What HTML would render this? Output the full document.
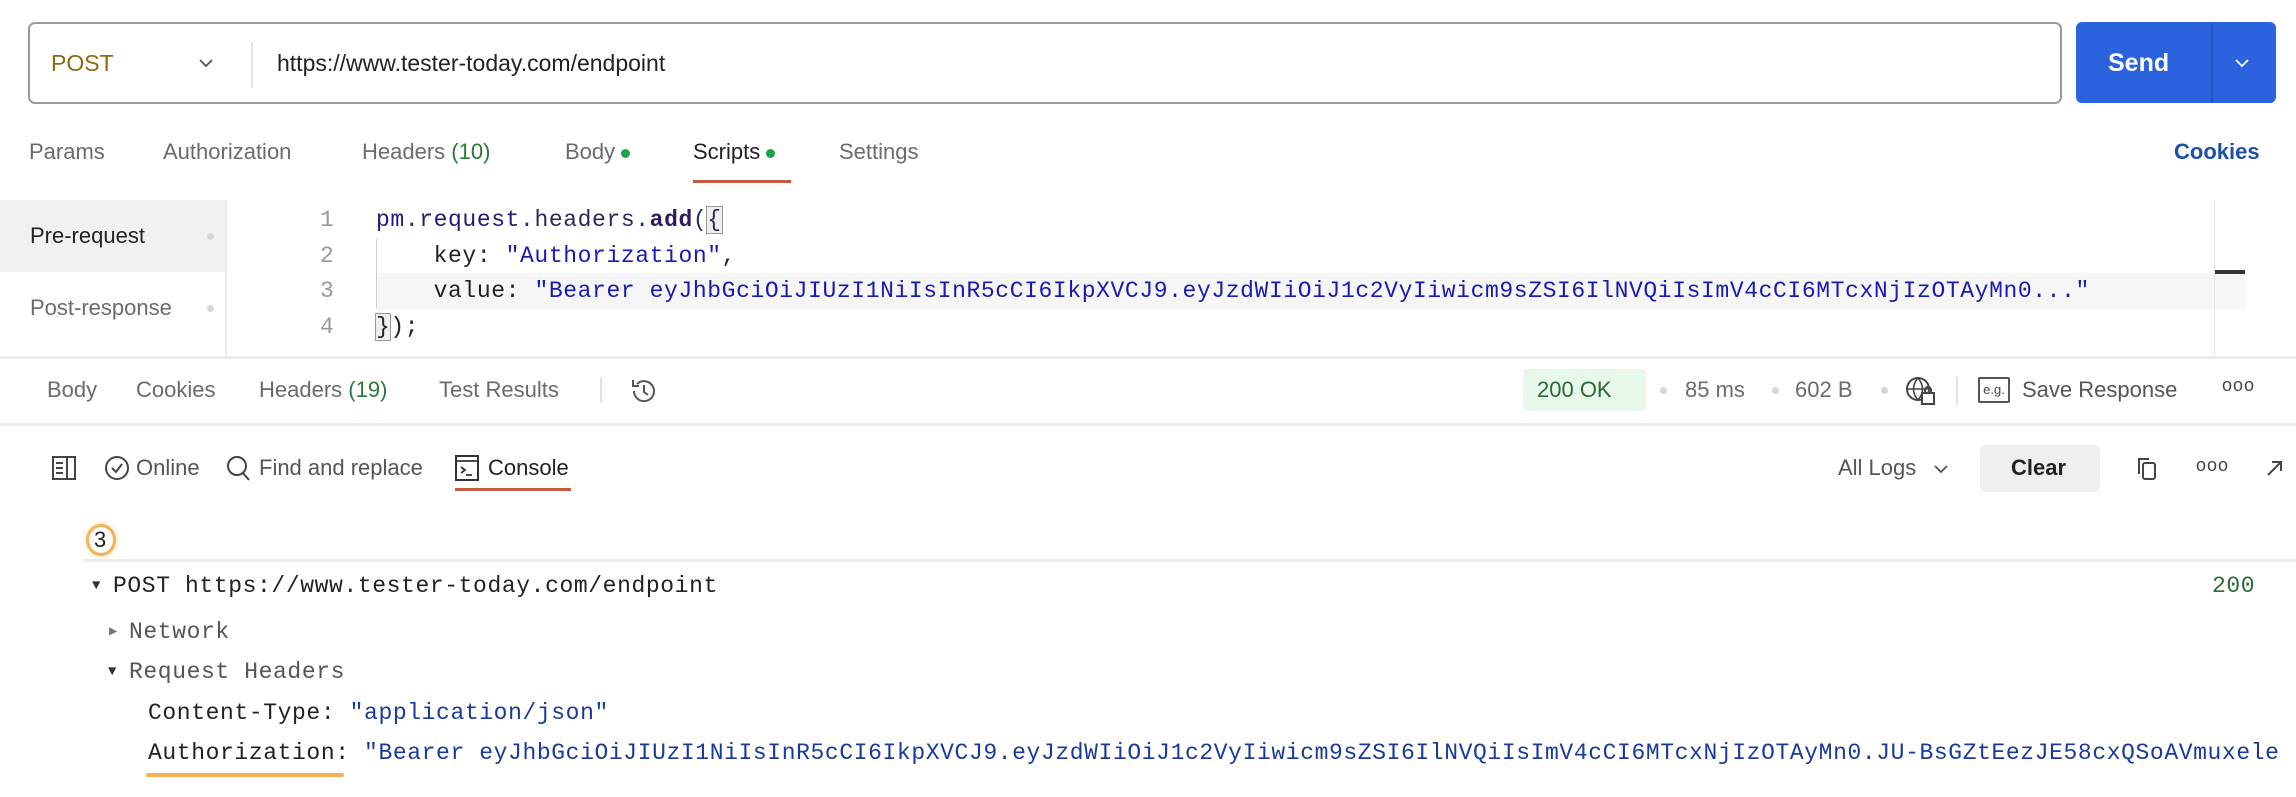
<!DOCTYPE html>
<html><head><meta charset="utf-8"><style>
*{margin:0;padding:0;box-sizing:border-box}
body{width:2296px;height:797px;overflow:hidden;background:#fff;position:relative;font-family:"Liberation Sans",sans-serif;color:#6b6b6b}
.a{position:absolute;white-space:pre}
.s{font-size:22px;line-height:30px}
.m{font-family:"Liberation Mono",monospace;font-size:23px;letter-spacing:0.6px;line-height:30px}
.dot{display:inline-block;width:9px;height:9px;border-radius:50%;background:#1aa34a;vertical-align:middle;margin-left:6px}
.g{color:#2a7a3a}
.sep{position:absolute;height:3px;background:#ebebeb}
.gd{position:absolute;width:7px;height:7px;border-radius:50%;background:#d6d6d6}
</style></head><body>
<div class="a" style="left:28px;top:22px;width:2034px;height:82px;border:2px solid #9a9a9a;border-radius:7px"></div>
<div class="a s" style="left:51px;top:48px;color:#8c6a10;font-size:23px">POST</div>
<svg class="a" style="left:198px;top:57px" width="16" height="12" viewBox="0 0 16 12"><path d="M2 3l6 6 6-6" fill="none" stroke="#555" stroke-width="1.8"/></svg>
<div class="a" style="left:251px;top:42px;width:2px;height:46px;background:#e2e2e2"></div>
<div class="a s" style="left:277px;top:48px;color:#222;font-size:23px">https://www.tester-today.com/endpoint</div>
<div class="a" style="left:2076px;top:22px;width:200px;height:81px;background:#2b63de;border-radius:6px"></div>
<div class="a" style="left:2211px;top:22px;width:2px;height:81px;background:#2456c4"></div>
<div class="a s" style="left:2108px;top:48px;color:#fff;font-size:25px;font-weight:bold">Send</div>
<svg class="a" style="left:2234px;top:57px" width="16" height="12" viewBox="0 0 16 12"><path d="M2 3l6 6 6-6" fill="none" stroke="#fff" stroke-width="1.8"/></svg>
<div class="a s" style="left:29px;top:137px">Params</div>
<div class="a s" style="left:163px;top:137px">Authorization</div>
<div class="a s" style="left:362px;top:137px">Headers <span class="g">(10)</span></div>
<div class="a s" style="left:565px;top:137px">Body<span class="dot"></span></div>
<div class="a s" style="left:693px;top:137px;color:#212121">Scripts<span class="dot"></span></div>
<div class="a" style="left:693px;top:180px;width:98px;height:3px;background:#c45a3c"></div>
<div class="a s" style="left:839px;top:137px">Settings</div>
<div class="a s" style="left:2174px;top:137px;color:#1f4fa8;font-weight:bold">Cookies</div>
<div class="a" style="left:0;top:200px;width:227px;height:157px;border-right:2px solid #ececec"></div>
<div class="a" style="left:0;top:200px;width:225px;height:72px;background:#f1f1f1"></div>
<div class="a s" style="left:30px;top:221px;color:#222">Pre-request</div>
<div class="gd" style="left:207px;top:233px"></div>
<div class="a s" style="left:30px;top:293px">Post-response</div>
<div class="gd" style="left:207px;top:305px"></div>
<div class="a" style="left:376px;top:273px;width:1870px;height:37px;background:#f6f6f6"></div>
<div class="a" style="left:376px;top:238px;width:1px;height:70px;background:#d0d0d0"></div>
<div class="a" style="left:2214px;top:200px;width:1px;height:157px;background:#e6e6e6"></div>
<div class="a" style="left:2215px;top:270px;width:30px;height:4px;background:#333"></div>
<div class="a m" style="left:320px;top:205px;color:#999">1</div>
<div class="a m" style="left:320px;top:241px;color:#999">2</div>
<div class="a m" style="left:320px;top:276px;color:#999">3</div>
<div class="a m" style="left:320px;top:312px;color:#999">4</div>
<div class="a m" style="left:376px;top:205px;color:#2a2a5a"><span style="color:#201a7a">pm</span>.<span style="color:#201a7a">request</span>.headers.<b style="color:#301a5a">add</b>(<span style="outline:1px solid #999;background:#eee">{</span></div>
<div class="a m" style="left:376px;top:241px;color:#222">    key: <span style="color:#1a1ab0">"Authorization"</span>,</div>
<div class="a m" style="left:376px;top:276px;color:#222">    value: <span style="color:#1a1ab0">"Bearer eyJhbGciOiJIUzI1NiIsInR5cCI6IkpXVCJ9.eyJzdWIiOiJ1c2VyIiwicm9sZSI6IlNVQiIsImV4cCI6MTcxNjIzOTAyMn0..."</span></div>
<div class="a m" style="left:376px;top:312px;color:#222"><span style="outline:1px solid #999;background:#eee">}</span>);</div>
<div class="sep" style="left:0;top:356px;width:2296px"></div>
<div class="a s" style="left:47px;top:375px">Body</div>
<div class="a s" style="left:136px;top:375px">Cookies</div>
<div class="a s" style="left:259px;top:375px">Headers <span class="g">(19)</span></div>
<div class="a s" style="left:439px;top:375px">Test Results</div>
<div class="a" style="left:600px;top:377px;width:2px;height:26px;background:#e2e2e2"></div>
<svg class="a" style="left:628px;top:375px" width="32" height="32" viewBox="0 0 32 32"><path d="M6 16a10 10 0 1 0 3-7" fill="none" stroke="#555" stroke-width="2"/><path d="M5 5v6h6" fill="none" stroke="#555" stroke-width="2"/><path d="M16 10v7l4 3" fill="none" stroke="#555" stroke-width="2"/></svg>
<div class="a" style="left:1523px;top:369px;width:123px;height:42px;background:#e7f8ea;border-radius:4px"></div>
<div class="a s" style="left:1537px;top:375px;color:#2a6a36">200 OK</div>
<div class="gd" style="left:1660px;top:387px"></div>
<div class="a s" style="left:1685px;top:375px">85 ms</div>
<div class="gd" style="left:1772px;top:387px"></div>
<div class="a s" style="left:1795px;top:375px">602 B</div>
<div class="gd" style="left:1881px;top:387px"></div>
<svg class="a" style="left:1904px;top:375px" width="34" height="32" viewBox="0 0 34 32"><circle cx="14" cy="14" r="11" fill="none" stroke="#444" stroke-width="2"/><path d="M3 14h22M14 3c-6 7-6 15 0 22M14 3c6 7 6 15 0 22" fill="none" stroke="#444" stroke-width="1.6"/><rect x="18" y="18" width="12" height="11" fill="#fff" stroke="#444" stroke-width="2"/><path d="M21 18v-3a3 3 0 0 1 6 0v3" fill="none" stroke="#444" stroke-width="2"/></svg>
<div class="a" style="left:1956px;top:377px;width:2px;height:28px;background:#e2e2e2"></div>
<div class="a" style="left:1978px;top:377px;width:32px;height:26px;border:2px solid #555;border-radius:2px;font-size:13px;line-height:22px;text-align:center;color:#444">e.g.</div>
<div class="a s" style="left:2022px;top:375px;color:#555">Save Response</div>
<div class="a s" style="left:2222px;top:370px;color:#444;font-size:18px;letter-spacing:1px">ooo</div>
<div class="sep" style="left:0;top:423px;width:2296px"></div>
<svg class="a" style="left:52px;top:456px" width="24" height="24" viewBox="0 0 24 24"><rect x="1" y="1" width="22" height="22" fill="none" stroke="#444" stroke-width="2"/><path d="M15 1v22M4 7h7M4 12h7M4 17h7" stroke="#444" stroke-width="2"/></svg>
<svg class="a" style="left:104px;top:455px" width="26" height="26" viewBox="0 0 26 26"><circle cx="13" cy="13" r="11" fill="none" stroke="#444" stroke-width="2"/><path d="M8 13l4 4 6-8" fill="none" stroke="#444" stroke-width="2"/></svg>
<div class="a s" style="left:136px;top:453px;color:#555">Online</div>
<svg class="a" style="left:226px;top:455px" width="26" height="28" viewBox="0 0 26 28"><circle cx="11" cy="11" r="9" fill="none" stroke="#444" stroke-width="2"/><path d="M17 18l6 7" stroke="#444" stroke-width="2"/></svg>
<div class="a s" style="left:259px;top:453px;color:#555">Find and replace</div>
<svg class="a" style="left:455px;top:455px" width="24" height="26" viewBox="0 0 24 26"><rect x="1" y="1" width="22" height="24" fill="none" stroke="#333" stroke-width="2"/><path d="M1 6h22M6 12l4 3-4 3M11 20h6" fill="none" stroke="#333" stroke-width="1.8"/></svg>
<div class="a s" style="left:488px;top:453px;color:#212121">Console</div>
<div class="a" style="left:455px;top:488px;width:116px;height:3px;background:#c45a3c"></div>
<div class="a s" style="left:1838px;top:453px;color:#555">All Logs</div>
<svg class="a" style="left:1933px;top:463px" width="16" height="12" viewBox="0 0 16 12"><path d="M2 3l6 6 6-6" fill="none" stroke="#555" stroke-width="1.8"/></svg>
<div class="a" style="left:1980px;top:445px;width:120px;height:47px;background:#efefef;border-radius:6px"></div>
<div class="a s" style="left:2011px;top:453px;color:#222;font-weight:bold">Clear</div>
<svg class="a" style="left:2136px;top:456px" width="24" height="26" viewBox="0 0 24 26"><rect x="7" y="7" width="12" height="16" rx="2" fill="none" stroke="#444" stroke-width="2"/><path d="M3 18V3h10" fill="none" stroke="#444" stroke-width="2"/></svg>
<div class="a s" style="left:2196px;top:450px;color:#444;font-size:18px;letter-spacing:1px">ooo</div>
<svg class="a" style="left:2265px;top:458px" width="20" height="20" viewBox="0 0 20 20"><path d="M3 17L16 4M7 4h9v9" fill="none" stroke="#444" stroke-width="2"/></svg>
<div class="a" style="left:86px;top:524px;width:30px;height:32px;border-radius:50%;border:3px solid #f3b354;box-shadow:0 0 6px #f8d49a"></div>
<div class="a s" style="left:94px;top:525px;color:#222">3</div>
<div class="sep" style="left:83px;top:559px;width:2213px"></div>
<div class="a m" style="left:92px;top:571px;color:#333;font-size:14px">▼</div>
<div class="a m" style="left:113px;top:571px;color:#222">POST https://www.tester-today.com/endpoint</div>
<div class="a m" style="left:2212px;top:571px;color:#2a6a36">200</div>
<div class="a m" style="left:109px;top:617px;color:#777;font-size:14px">▶</div>
<div class="a m" style="left:129px;top:617px;color:#555">Network</div>
<div class="a m" style="left:108px;top:657px;color:#333;font-size:14px">▼</div>
<div class="a m" style="left:129px;top:657px;color:#555">Request Headers</div>
<div class="a m" style="left:148px;top:698px;color:#222">Content-Type: <span style="color:#1a3a9a">"application/json"</span></div>
<div class="a m" style="left:148px;top:738px;color:#222;width:2148px;overflow:hidden">Authorization: <span style="color:#1a3a9a">"Bearer eyJhbGciOiJIUzI1NiIsInR5cCI6IkpXVCJ9.eyJzdWIiOiJ1c2VyIiwicm9sZSI6IlNVQiIsImV4cCI6MTcxNjIzOTAyMn0.JU-BsGZtEezJE58cxQSoAVmuxele</span></div>
<div class="a" style="left:146px;top:773px;width:198px;height:4px;background:#f3b354;border-radius:2px"></div>
</body></html>
